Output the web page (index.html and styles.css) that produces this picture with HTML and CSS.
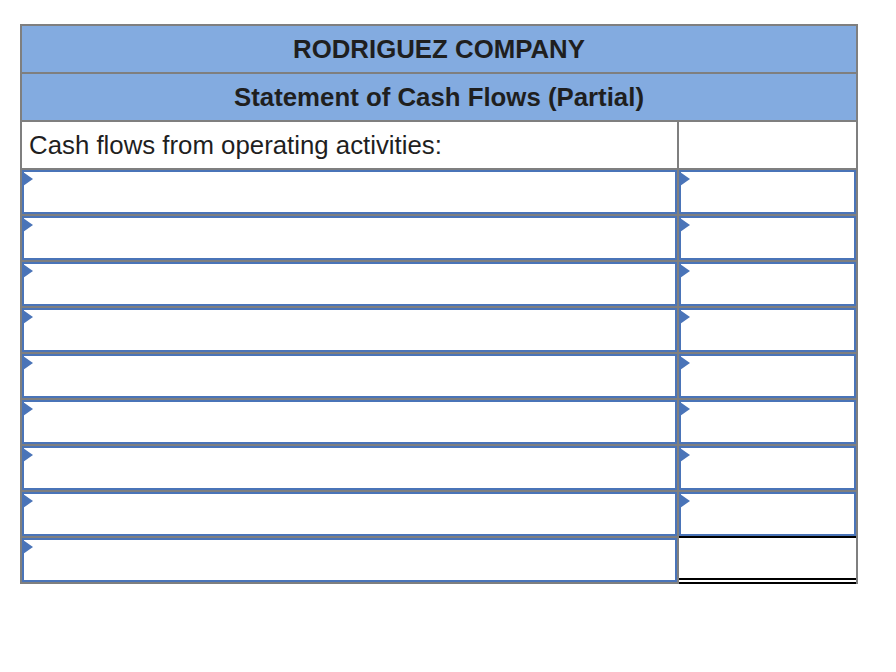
FILE: index.html
```html
<!DOCTYPE html>
<html>
<head>
<meta charset="utf-8">
<link rel="stylesheet" href="styles.css">
</head>
<body>
<div class="sheet">
  <div class="hdr">RODRIGUEZ COMPANY</div>
  <div class="hdr">Statement of Cash Flows (Partial)</div>
  <div class="row tall">
    <div class="cell left label">Cash flows from operating activities:</div>
    <div class="cell right"></div>
  </div>
  <div class="row"><div class="cell left"><div class="inp"></div></div><div class="cell right"><div class="inp"></div></div></div>
  <div class="row"><div class="cell left"><div class="inp"></div></div><div class="cell right"><div class="inp"></div></div></div>
  <div class="row"><div class="cell left"><div class="inp"></div></div><div class="cell right"><div class="inp"></div></div></div>
  <div class="row"><div class="cell left"><div class="inp"></div></div><div class="cell right"><div class="inp"></div></div></div>
  <div class="row"><div class="cell left"><div class="inp"></div></div><div class="cell right"><div class="inp"></div></div></div>
  <div class="row"><div class="cell left"><div class="inp"></div></div><div class="cell right"><div class="inp"></div></div></div>
  <div class="row"><div class="cell left"><div class="inp"></div></div><div class="cell right"><div class="inp"></div></div></div>
  <div class="row"><div class="cell left"><div class="inp"></div></div><div class="cell right sub"><div class="inp"></div></div></div>
  <div class="row"><div class="cell left"><div class="inp"></div></div><div class="cell right total"></div></div>
</div>
</body>
</html>
```

FILE: styles.css
```css
html, body {
  margin: 0;
  padding: 0;
  background: #ffffff;
}
body {
  padding: 24px 0 0 20px;
  font-family: "Liberation Sans", Arial, sans-serif;
  color: #1f1f1f;
}
.sheet {
  width: 838px;
  box-sizing: border-box;
  border: 2px solid #7f7f7f;
  border-bottom: none;
}
.hdr {
  height: 48px;
  box-sizing: border-box;
  border-bottom: 2px solid #7f7f7f;
  background: #83abe0;
  font-weight: bold;
  font-size: 25.8px;
  display: flex;
  align-items: center;
  justify-content: center;
  padding-top: 1px;
}
.row {
  display: flex;
  height: 46px;
}
.row.tall {
  height: 48px;
}
.cell {
  box-sizing: border-box;
  border-bottom: 2px solid #7f7f7f;
  height: 100%;
}
.left {
  width: 657px;
  border-right: 2px solid #7f7f7f;
}
.right {
  flex: 1;
}
.label {
  font-size: 25.8px;
  display: flex;
  align-items: center;
  padding-left: 7px;
  padding-top: 1px;
}
.sub {
  border-bottom-color: #000000;
}
.total {
  border-bottom: 6px double #000000;
}
.inp {
  position: relative;
  box-sizing: border-box;
  height: 100%;
  border: 2px solid #4a74b8;
  background: #ffffff;
}
.inp::before {
  content: "";
  position: absolute;
  left: -1px;
  top: 0;
  width: 0;
  height: 0;
  border-left: 10px solid #4a74b8;
  border-top: 7px solid transparent;
  border-bottom: 7px solid transparent;
}
```
